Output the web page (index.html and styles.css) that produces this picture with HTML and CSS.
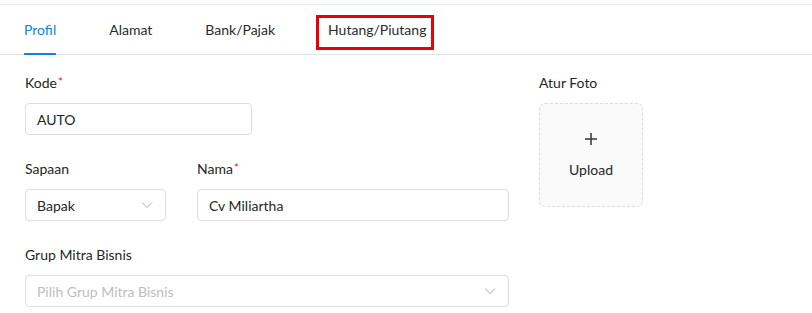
FILE: index.html
```html
<!DOCTYPE html>
<html lang="en">

<head>
    <meta charset="UTF-8">
    <meta name="viewport" content="width=device-width, initial-scale=1.0">
    <title>Mitra Bisnis - Profil</title>
    <link rel="stylesheet" href="styles.css">
</head>

<body>
    <div class="page">
        <!-- Tabs -->
        <div class="tabs">
            <div class="tab active">Profil</div>
            <div class="tab">Alamat</div>
            <div class="tab">Bank/Pajak</div>
            <div class="tab marked">Hutang/Piutang</div>
        </div>

        <!-- Profil Form -->
        <div class="form">
            <div class="form-main">
                <div class="form-group">
                    <label>Kode<span class="req">*</span></label>
                    <div class="input kode">AUTO</div>
                </div>

                <div class="form-row">
                    <div class="form-group">
                        <label>Sapaan</label>
                        <div class="input select sapaan">
                            <span>Bapak</span>
                            <svg class="chevron" viewBox="0 0 12 12" width="12" height="12">
                                <path d="M1 3.5 L6 8.5 L11 3.5" fill="none" stroke="#aaa" stroke-width="1"/>
                            </svg>
                        </div>
                    </div>
                    <div class="form-group grow">
                        <label>Nama<span class="req">*</span></label>
                        <div class="input">Cv Miliartha</div>
                    </div>
                </div>

                <div class="form-group last">
                    <label>Grup Mitra Bisnis</label>
                    <div class="input select placeholder">
                        <span>Pilih Grup Mitra Bisnis</span>
                        <svg class="chevron" viewBox="0 0 12 12" width="12" height="12">
                            <path d="M1 3.5 L6 8.5 L11 3.5" fill="none" stroke="#aaa" stroke-width="1"/>
                        </svg>
                    </div>
                </div>
            </div>

            <div class="form-side">
                <label>Atur Foto</label>
                <div class="upload">
                    <svg viewBox="0 0 14 14" width="14" height="14">
                        <path d="M7 1 V13 M1 7 H13" stroke="#333" stroke-width="1.5"/>
                    </svg>
                    <span>Upload</span>
                </div>
            </div>
        </div>
    </div>
</body>

</html>
```

FILE: styles.css
```css
* {
    margin: 0;
    padding: 0;
    box-sizing: border-box;
    font-family: Lato, "Open Sans", sans-serif;
}

body {
    background: white;
    color: #333;
    font-size: 14px;
}

.page {
    padding-top: 4px;
}

.tabs {
    display: flex;
    gap: 53px;
    height: 51px;
    padding-left: 24px;
    border-top: 1px solid #e8e8e8;
    border-bottom: 1px solid #e4e4e4;
}

.tab {
    position: relative;
    display: flex;
    align-items: center;
    padding-bottom: 1px;
    color: #2b2b2b;
    cursor: pointer;
}

.tab.active {
    color: #1383db;
    border-bottom: 2px solid #1383db;
    margin-bottom: -1px;
    padding-bottom: 0;
}

/* annotation frame */
.tab.marked::after {
    content: "";
    position: absolute;
    left: -12px;
    right: -8px;
    top: 10px;
    bottom: 4px;
    border: 3px solid #e8000b;
}

.form {
    display: flex;
    gap: 30px;
    padding: 18px 0 0 25px;
}

.form-main {
    width: 484px;
}

.form-row {
    display: flex;
    gap: 31px;
}

.form-group {
    margin-bottom: 24px;
}

.form-group.last {
    margin-bottom: 0;
}

.form-group.grow {
    flex: 1;
}

label {
    display: block;
    height: 22px;
    line-height: 20px;
    margin-bottom: 8px;
    color: #262626;
}

.req {
    color: #f5222d;
    font-size: 12px;
    margin-left: 1px;
    vertical-align: top;
    line-height: 18px;
}

.input {
    display: flex;
    align-items: center;
    justify-content: space-between;
    height: 32px;
    padding: 0 11px;
    border: 1px solid #dedede;
    border-radius: 4px;
    color: #262626;
}

.input.kode {
    width: 227px;
}

.input.sapaan {
    width: 141px;
}

.input.placeholder {
    color: #bdbdbd;
}

.chevron {
    margin-right: 1px;
}

.upload {
    display: flex;
    flex-direction: column;
    align-items: center;
    justify-content: center;
    gap: 15px;
    width: 104px;
    height: 104px;
    background: #fafafa;
    border: 1px dashed #dcdcdc;
    border-radius: 6px;
    color: #262626;
}
```
